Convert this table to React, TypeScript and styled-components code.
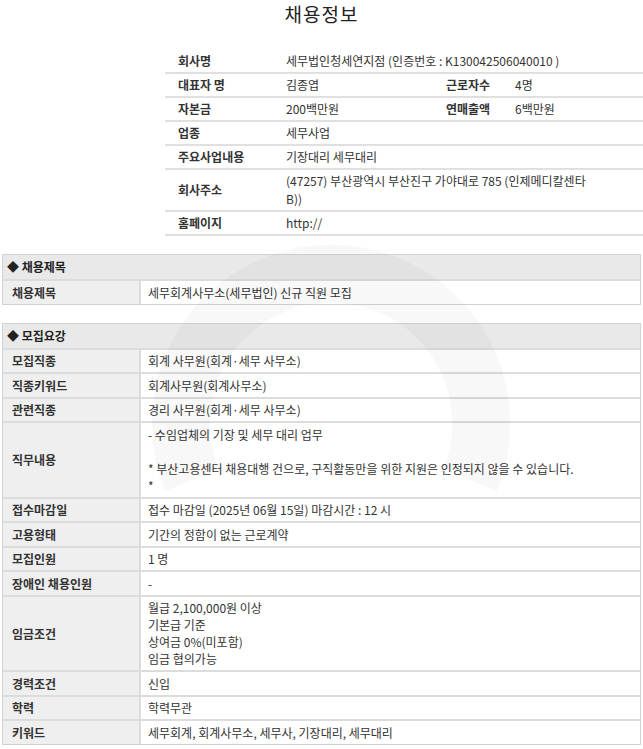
import React from "react";
import styled, { createGlobalStyle } from "styled-components";

const Global = createGlobalStyle`
  html, body { margin: 0; padding: 0; background: #fff; }
  body {
    font-family: "Noto Sans CJK KR", "Noto Sans", sans-serif;
    font-size: 12px;
    color: #333;
  }
`;

const Page = styled.div`
  position: relative;
  width: 643px;
  overflow: hidden;
  padding-bottom: 2px;
`;

const Title = styled.h2`
  margin: 2px 0 0;
  height: 26px;
  line-height: 24px;
  text-align: center;
  font-size: 19px;
  font-weight: 400;
  letter-spacing: 1px;
  color: #222;
`;

const CompanyTable = styled.div`
  margin: 22px 0 0 165px;
`;

const InfoRow = styled.div`
  display: grid;
  grid-template-columns: 108px 160px 69px 1fr;
  border-bottom: 2px solid #e0e0e0;
  align-items: center;
`;

const InfoLabel = styled.div`
  padding: 2px 0 2px 13px;
  line-height: 18px;
  font-weight: 700;
  color: #333;
`;

const InfoValue = styled.div<{ $span?: boolean }>`
  padding: 2px 0 2px 13px;
  line-height: 18px;
  color: #333;
  ${(p) => (p.$span ? "grid-column: 2 / -1;" : "")}
`;

const Section = styled.section`
  margin: 18px 2px 0;
  border: 1px solid #d2d2d2;
  background: #dcdcdc;
  display: grid;
  grid-template-columns: 136px 1fr;
  gap: 2px;
`;

const SectionHeader = styled.div`
  grid-column: 1 / -1;
  background: #e9e9e9;
  height: 24px;
  line-height: 24px;
  padding-left: 4px;
  font-weight: 700;
  color: #222;
`;

const Label = styled.div`
  background: #efefef;
  padding: 2.75px 0 2.75px 9px;
  line-height: 17px;
  font-weight: 700;
  color: #333;
  display: flex;
  align-items: center;
`;

const Value = styled.div`
  background: #fff;
  padding: 2.75px 6px 2.75px 7px;
  line-height: 17px;
  color: #333;
  white-space: pre-line;
`;

const Watermark = styled.svg`
  position: absolute;
  left: 140px;
  top: 230px;
  width: 380px;
  height: 380px;
  pointer-events: none;
`;

const company: { label: string; value: React.ReactNode; label2?: string; value2?: string }[] = [
  { label: "회사명", value: "세무법인청세연지점 (인증번호 : K130042506040010 )" },
  { label: "대표자 명", value: "김종엽", label2: "근로자수", value2: "4명" },
  { label: "자본금", value: "200백만원", label2: "연매출액", value2: "6백만원" },
  { label: "업종", value: "세무사업" },
  { label: "주요사업내용", value: "기장대리 세무대리" },
  {
    label: "회사주소",
    value: (
      <>
        (47257) 부산광역시 부산진구 가야대로 785 (인제메디칼센타
        <br />
        B))
      </>
    ),
  },
  { label: "홈페이지", value: "http://" },
];

const recruit: { label: string; value: string }[] = [
  { label: "모집직종", value: "회계 사무원(회계·세무 사무소)" },
  { label: "직종키워드", value: "회계사무원(회계사무소)" },
  { label: "관련직종", value: "경리 사무원(회계·세무 사무소)" },
  {
    label: "직무내용",
    value:
      "- 수임업체의 기장  및 세무 대리 업무\n\n* 부산고용센터 채용대행 건으로, 구직활동만을 위한 지원은 인정되지 않을 수 있습니다.\n*",
  },
  { label: "접수마감일", value: "접수 마감일 (2025년 06월 15일) 마감시간 : 12 시" },
  { label: "고용형태", value: "기간의 정함이 없는 근로계약" },
  { label: "모집인원", value: "1 명" },
  { label: "장애인 채용인원", value: "-" },
  {
    label: "임금조건",
    value: "월급 2,100,000원 이상\n기본급 기준\n상여금 0%(미포함)\n임금 협의가능",
  },
  { label: "경력조건", value: "신입" },
  { label: "학력", value: "학력무관" },
  { label: "키워드", value: "세무회계, 회계사무소, 세무사, 기장대리, 세무대리" },
];

export default function App() {
  return (
    <Page>
      <Global />
      <Title>채용정보</Title>
      <CompanyTable>
        {company.map((r) => (
          <InfoRow key={r.label}>
            <InfoLabel>{r.label}</InfoLabel>
            {r.label2 ? (
              <>
                <InfoValue>{r.value}</InfoValue>
                <InfoLabel>{r.label2}</InfoLabel>
                <InfoValue>{r.value2}</InfoValue>
              </>
            ) : (
              <InfoValue $span>{r.value}</InfoValue>
            )}
          </InfoRow>
        ))}
      </CompanyTable>

      <Section>
        <SectionHeader>◆ 채용제목</SectionHeader>
        <Label>채용제목</Label>
        <Value>세무회계사무소(세무법인) 신규 직원 모집</Value>
      </Section>

      <Section>
        <SectionHeader>◆ 모집요강</SectionHeader>
        {recruit.map((r) => (
          <React.Fragment key={r.label}>
            <Label>{r.label}</Label>
            <Value>{r.value}</Value>
          </React.Fragment>
        ))}
      </Section>

      <Watermark viewBox="0 0 380 380">
        <path
          fill="none"
          stroke="rgba(0,0,0,0.028)"
          strokeWidth="58"
          d="M52 250 A150 150 0 1 1 330 250"
        />
      </Watermark>
    </Page>
  );
}
